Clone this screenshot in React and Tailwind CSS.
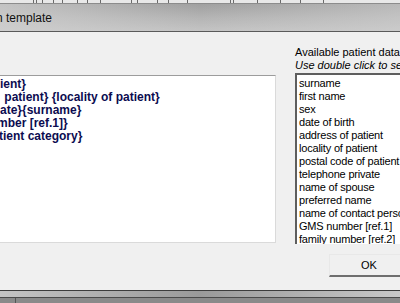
import React from "react";

const items = [
  "surname",
  "first name",
  "sex",
  "date of birth",
  "address of patient",
  "locality of patient",
  "postal code of patient",
  "telephone private",
  "name of spouse",
  "preferred name",
  "name of contact person",
  "GMS number [ref.1]",
  "family number [ref.2]",
];

const ticks = [33, 36, 42, 53, 62, 77, 87, 100, 131, 137, 157, 168, 187, 230, 233, 257, 280, 300, 323];

export default function App() {
  return (
    <div className="w-[400px] h-[303px] overflow-hidden flex flex-col bg-[#f0f0f0] font-['Liberation_Sans',Arial,sans-serif]">
      {/* window behind */}
      <div className="h-[4px] bg-[#e8e8e8] border-b border-[#8c8c8c] shrink-0">
        <svg width="400" height="3" className="block">
          {ticks.map((x) => (
            <line key={x} x1={x + 0.5} y1="0" x2={x + 0.5} y2="3" stroke="#6a6a6a" strokeWidth="1" />
          ))}
        </svg>
      </div>
      {/* title bar */}
      <div className="h-[27px] shrink-0 flex items-center bg-gradient-to-b from-[#a0a0a0] via-[#b4b4b4] to-[#c4c4c4] relative overflow-hidden">
        <div className="absolute inset-0 bg-gradient-to-r from-[#d2d2d2]/70 via-transparent to-[#d2d2d2]/50" />
        <span className="relative ml-[-4px] text-[12px] leading-none text-[#111] whitespace-pre">n template</span>
      </div>
      <div className="h-px bg-[#5a5a5a] shrink-0" />
      {/* body */}
      <div className="flex-1 flex flex-col min-h-0">
        <div className="flex items-start">
          {/* template text box */}
          <div className="mt-[43px] w-[276px] h-[168px] shrink-0 bg-white border-t border-[#9c9c9c] border-r border-b border-r-[#dadada] border-b-[#dadada] pt-[2px] overflow-hidden">
            <div className="text-[12px] leading-[13px] font-bold text-[#0c0c50] whitespace-pre">
              <div>ient{"}"}</div>
              <div className="ml-[1px]">{" patient} {locality of patient}"}</div>
              <div>{"ate}{surname}"}</div>
              <div className="ml-[-3px]">{"mber [ref.1]}"}</div>
              <div className="ml-[-1px]">{"tient category}"}</div>
            </div>
          </div>
          {/* available data */}
          <div className="ml-[19px] pt-[14px] w-[120px] shrink-0">
            <div className="text-[11px] leading-[13px] text-black whitespace-nowrap">Available patient data</div>
            <div className="text-[11px] leading-[13px] italic text-black whitespace-nowrap">Use double click to select</div>
            <div className="mt-px h-[171px] bg-white border-l-2 border-t-2 border-l-[#5e5e5e] border-t-[#5e5e5e] pl-[2px] pt-[2px] overflow-hidden">
              {items.map((t) => (
                <div key={t} className="text-[11px] leading-[13px] tracking-[-0.2px] text-black whitespace-nowrap">
                  {t}
                </div>
              ))}
            </div>
          </div>
        </div>
        <div className="mt-[10px] pl-[329px]">
          <div className="w-[90px] h-[23px] bg-[#f0f0f0] border-t border-l border-[#e8e8e8] border-b-2 border-b-[#6e6e6e] flex items-center">
            <span className="ml-[31px] text-[11px] leading-none text-black">OK</span>
          </div>
        </div>
      </div>
      {/* bottom frame */}
      <div className="h-[13px] shrink-0 flex flex-col">
        <div className="h-px bg-[#3c3c3c]" />
        <div className="h-[6px] bg-gradient-to-r from-[#c4c4c4] via-[#9a9a9a] to-[#c8c8c8]" />
        <div className="h-px bg-[#4a4a4a]" />
        <div className="flex-1 bg-[#8a8a8a] flex">
          <div className="w-[16px] border-r border-[#555]" />
        </div>
      </div>
    </div>
  );
}
